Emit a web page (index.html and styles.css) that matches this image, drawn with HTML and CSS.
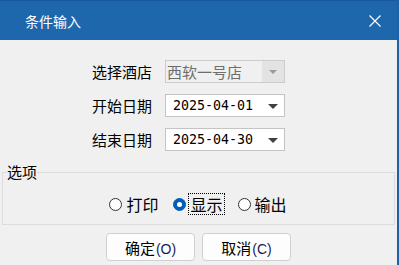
FILE: index.html
```html
<html>
	<head>
		<title>条件输入</title>
		<link rel="stylesheet" href="styles.css">
	</head>
	<body>
		<div class="window">
			<div class="titlebar">
				<span class="title">条件输入</span>
				<svg class="close" width="12" height="12" viewBox="0 0 12 12">
					<path d="M0.5 0.5 L11.5 11.5 M11.5 0.5 L0.5 11.5" stroke="#ffffff" stroke-width="1.2" fill="none"/>
				</svg>
			</div>
			<div class="content">
				<div class="form">
					<div class="row">
						<div class="label">选择酒店</div>
						<div class="combo disabled">
							<span class="value">西软一号店</span>
							<span class="drop"><span class="arrow"></span></span>
						</div>
					</div>
					<div class="row">
						<div class="label">开始日期</div>
						<div class="combo">
							<span class="value date">2025-04-01</span>
							<span class="drop"><span class="arrow"></span></span>
						</div>
					</div>
					<div class="row">
						<div class="label">结束日期</div>
						<div class="combo">
							<span class="value date">2025-04-30</span>
							<span class="drop"><span class="arrow"></span></span>
						</div>
					</div>
				</div>
				<fieldset class="options">
					<legend>选项</legend>
					<div class="radios">
						<div class="radio"><span class="dot"></span><span class="text">打印</span></div>
						<div class="radio checked"><span class="dot"></span><span class="text focus">显示</span></div>
						<div class="radio"><span class="dot"></span><span class="text">输出</span></div>
					</div>
				</fieldset>
				<div class="buttons">
					<button>确定<span class="key">(O)</span></button>
					<button>取消<span class="key">(C)</span></button>
				</div>
			</div>
		</div>
	</body>
</html>
```
FILE: styles.css
```css
body{
	margin: 0;
	width: 399px;
	height: 265px;
	overflow: hidden;
	font-family: "Noto Sans CJK SC", "Noto Sans", sans-serif;
	font-size: 15px;
	color: #000000;
	background-color: #f0f0f0;
}
div.window{
	display: flex;
	flex-direction: column;
	height: 265px;
	border-right: 2px solid #1c62a8;
	box-sizing: border-box;
}

/* title bar */
div.titlebar{
	height: 40px;
	flex: none;
	display: flex;
	align-items: center;
	justify-content: space-between;
	background-color: #1f67ac;
	border-top: 1px solid #17599b;
	box-sizing: border-box;
	padding: 0 16px 0 25px;
	color: white;
}
span.title{
	font-size: 14px;
	line-height: 20px;
}
svg.close{
	display: block;
	margin-top: 1px;
}

/* form rows */
div.content{
	flex: 1;
	display: flex;
	flex-direction: column;
}
div.form{
	display: flex;
	flex-direction: column;
	gap: 11px;
	padding: 20px 0 0 92px;
}
div.row{
	display: flex;
	align-items: center;
	height: 23px;
}
div.label{
	width: 73px;
	line-height: 20px;
}
div.combo{
	width: 120px;
	height: 23px;
	box-sizing: border-box;
	border: 1px solid #c4c4c4;
	background-color: #ffffff;
	display: flex;
	align-items: center;
}
div.combo span.value{
	flex: 1;
	padding-left: 7px;
	line-height: 20px;
}
span.date{
	font-family: "DejaVu Sans Mono", monospace;
	font-size: 13.3px;
}
span.drop{
	width: 22px;
	height: 100%;
	display: flex;
	align-items: center;
	justify-content: center;
}
span.arrow{
	width: 0;
	height: 0;
	border-left: 5px solid transparent;
	border-right: 5px solid transparent;
	border-top: 5px solid #404040;
	margin-top: 1px;
}
div.combo.disabled{
	background-color: #f0f0f0;
	border-color: #cccccc;
}
div.combo.disabled span.value{
	color: #6d6d6d;
	padding-left: 1px;
}
div.combo.disabled span.drop{
	background-color: #e3e3e3;
}
div.combo.disabled span.arrow{
	border-top-color: #9a9a9a;
	border-left-width: 4px;
	border-right-width: 4px;
	border-top-width: 4px;
}

/* options group */
fieldset.options{
	margin: 11px 2px 0 2px;
	padding: 11px 4px 9px 4px;
	border: 1px solid #dcdcdc;
}
fieldset.options legend{
	padding: 0;
	line-height: 20px;
}
div.radios{
	display: flex;
	justify-content: center;
	gap: 14px;
}
div.radio{
	display: flex;
	align-items: center;
	gap: 3px;
	height: 22px;
	font-size: 16px;
}
span.dot{
	width: 13px;
	height: 13px;
	box-sizing: border-box;
	border: 1px solid #333333;
	border-radius: 50%;
	background-color: #ffffff;
	display: flex;
	align-items: center;
	justify-content: center;
}
div.radio.checked span.dot{
	border-color: #005fb8;
	background-color: #005fb8;
}
div.radio.checked span.dot::after{
	content: "";
	width: 5px;
	height: 5px;
	border-radius: 50%;
	background-color: #ffffff;
}
span.text{
	line-height: 20px;
	padding: 0 1px;
}
span.focus{
	outline: 1px dotted #000000;
}

/* buttons */
div.buttons{
	display: flex;
	justify-content: center;
	gap: 7px;
	margin-top: 8px;
}
button{
	width: 89px;
	height: 28px;
	border: 1px solid #d0d0d0;
	border-radius: 4px;
	background-color: #fdfdfd;
	font-family: inherit;
	font-size: 15px;
	color: #000000;
	padding: 0;
}
span.key{
	font-family: "Liberation Sans", sans-serif;
	font-size: 14px;
	color: #1a1a5a;
	margin-left: 1px;
}
```
